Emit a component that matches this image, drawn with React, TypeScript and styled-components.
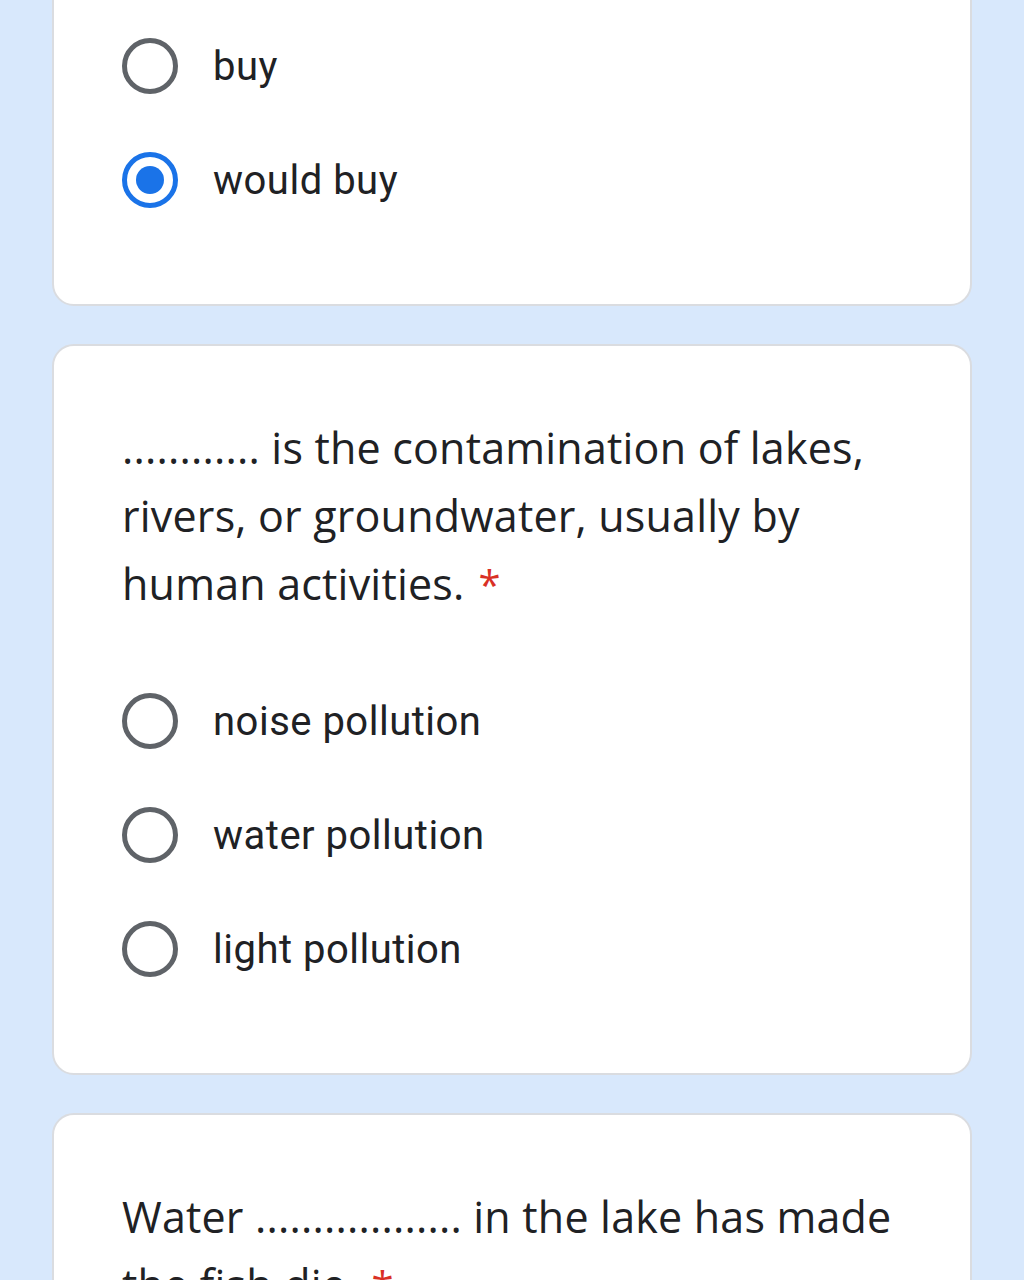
import React from "react";
import styled, { createGlobalStyle } from "styled-components";

const Global = createGlobalStyle`
  html, body { margin: 0; padding: 0; }
  body {
    background: #d8e8fc;
    overflow: hidden;
    font-family: Roboto, "Noto Sans", Arial, sans-serif;
    color: #202124;
  }
`;

const Page = styled.div`
  width: 1024px;
  height: 1280px;
  overflow: hidden;
  box-sizing: border-box;
  padding: 0 52px;
  display: flex;
  flex-direction: column;
  gap: 38px;
`;

const Card = styled.section<{ $clipTop?: boolean }>`
  background: #ffffff;
  border: 2px solid #dadce0;
  border-radius: 22px;
  box-sizing: border-box;
  padding: ${(p) => (p.$clipTop ? "38px" : "68px")} 68px 67px;
  margin-top: ${(p) => (p.$clipTop ? "-31px" : "0")};
  flex-shrink: 0;
  display: flex;
  flex-direction: column;
`;

const Question = styled.div`
  font-family: "Open Sans", Roboto, Arial, sans-serif;
  font-size: 43px;
  line-height: 68px;
  color: #202124;
  letter-spacing: 0.2px;
  margin-bottom: 45px;
`;

const Required = styled.span`
  color: #d93025;
  margin-left: 14px;
  font-size: 40px;
`;

const Options = styled.div`
  display: flex;
  flex-direction: column;
`;

const Row = styled.label`
  height: 114px;
  display: flex;
  align-items: center;
  gap: 35px;
`;

const Radio = styled.span<{ $checked?: boolean }>`
  width: 56px;
  height: 56px;
  box-sizing: border-box;
  border-radius: 50%;
  border: 5.5px solid ${(p) => (p.$checked ? "#1a73e8" : "#5f6368")};
  display: flex;
  align-items: center;
  justify-content: center;
  flex-shrink: 0;
  &::after {
    content: "";
    display: ${(p) => (p.$checked ? "block" : "none")};
    width: 28px;
    height: 28px;
    border-radius: 50%;
    background: #1a73e8;
  }
`;

const OptionText = styled.span`
  font-family: Roboto, "Noto Sans", Arial, sans-serif;
  font-size: 40px;
  letter-spacing: 0.5px;
  color: #202124;
`;

function Option({ label, checked }: { label: string; checked?: boolean }) {
  return (
    <Row>
      <Radio $checked={checked} />
      <OptionText>{label}</OptionText>
    </Row>
  );
}

export default function App() {
  return (
    <>
      <Global />
      <Page>
        <Card $clipTop>
          <Options>
            <Option label="buy" />
            <Option label="would buy" checked />
          </Options>
        </Card>
        <Card>
          <Question>
            ............ is the contamination of lakes, rivers, or groundwater,
            usually by human activities.<Required>*</Required>
          </Question>
          <Options>
            <Option label="noise pollution" />
            <Option label="water pollution" />
            <Option label="light pollution" />
          </Options>
        </Card>
        <Card>
          <Question>
            Water .................. in the lake has made the fish die.
            <Required>*</Required>
          </Question>
        </Card>
      </Page>
    </>
  );
}
